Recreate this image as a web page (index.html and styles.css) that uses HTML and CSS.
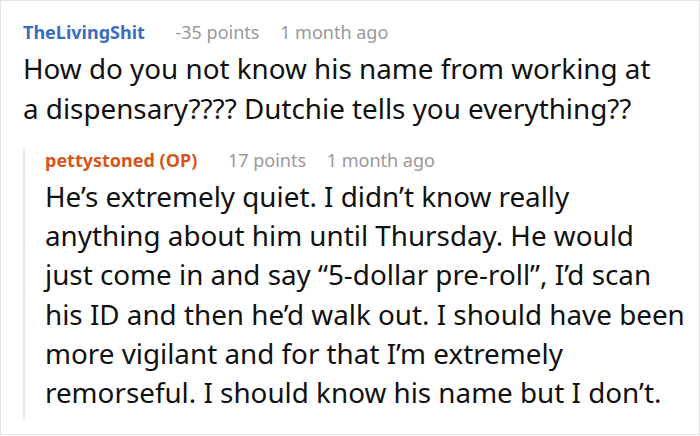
FILE: index.html
```html
<!DOCTYPE html>
<html lang="en">
<head>
  <meta charset="UTF-8" />
  <title>Comment</title>
  <link rel="stylesheet" href="styles.css">
</head>
<body>
  <div class="thread">
    <div class="comment">
      <div class="meta">
        <span class="author">TheLivingShit</span>
        <span class="points">-35 points</span>
        <span class="time">1 month ago</span>
      </div>
      <p class="text">How do you not know his name from working at<br>a dispensary???? Dutchie tells you everything??</p>

      <div class="reply">
        <div class="meta">
          <span class="author op">pettystoned (OP)</span>
          <span class="points">17 points</span>
          <span class="time">1 month ago</span>
        </div>
        <p class="text">He’s extremely quiet. I didn’t know really<br>anything about him until Thursday. He would<br>just come in and say “5-dollar pre-roll”, I’d scan<br>his ID and then he’d walk out. I should have been<br>more vigilant and for that I’m extremely<br>remorseful. I should know his name but I don’t.</p>
      </div>
    </div>
  </div>
</body>
</html>
```

FILE: styles.css
```css
body {
  margin: 0;
  font-family: "Noto Sans", "Open Sans", sans-serif;
  background-color: #fff;
}

.thread {
  width: 700px;
  height: 435px;
  box-sizing: border-box;
  border: 1px solid #e2e2e2;
  overflow: hidden;
}

.comment {
  padding: 19px 0 0 22px;
}

.meta {
  font-size: 18px;
  line-height: 24px;
  color: #999;
  white-space: nowrap;
}

.author {
  font-weight: bold;
  color: #3b6dbf;
  margin-right: 26px;
}

.author.op {
  color: #d5551c;
}

.points {
  margin-right: 16px;
}

.text {
  margin: 4px 0 0;
  font-size: 27.8px;
  line-height: 40px;
  color: #111;
  white-space: nowrap;
}

.reply {
  margin-top: 20px;
  border-left: 2px solid #e8e8e8;
  padding-left: 20px;
  padding-bottom: 8px;
}

.reply .text {
  margin-top: 5px;
  line-height: 39.2px;
}
```
